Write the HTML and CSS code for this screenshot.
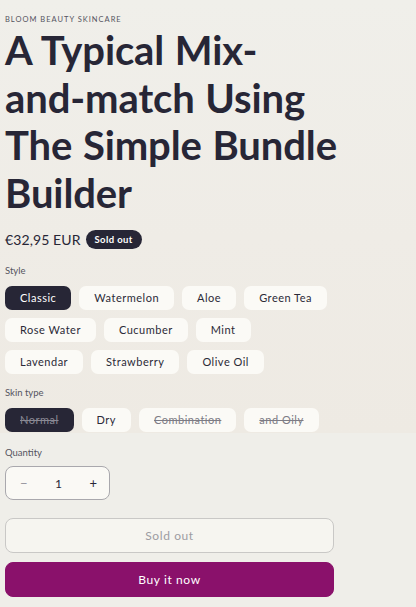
FILE: index.html
```html
<!DOCTYPE html>
<html lang="en">
<head>
<meta charset="utf-8">
<title>A Typical Mix-and-match Using The Simple Bundle Builder</title>
<link rel="stylesheet" href="styles.css">
</head>
<body>
<section class="upper">
  <div class="inner">
    <p class="brand">BLOOM BEAUTY SKINCARE</p>
    <h1 class="title">A Typical Mix-<br>and-match Using<br>The Simple Bundle<br>Builder</h1>
    <div class="price-row">
      <span class="price">€32,95 EUR</span>
      <span class="badge">Sold out</span>
    </div>
    <div class="option">
      <p class="label">Style</p>
      <div class="pills">
        <span class="pill selected">Classic</span>
        <span class="pill">Watermelon</span>
        <span class="pill">Aloe</span>
        <span class="pill">Green Tea</span>
        <span class="pill">Rose Water</span>
        <span class="pill">Cucumber</span>
        <span class="pill">Mint</span>
        <span class="pill">Lavendar</span>
        <span class="pill">Strawberry</span>
        <span class="pill">Olive Oil</span>
      </div>
    </div>
    <div class="option">
      <p class="label">Skin type</p>
      <div class="pills">
        <span class="pill selected unavailable">Normal</span>
        <span class="pill">Dry</span>
        <span class="pill unavailable">Combination</span>
        <span class="pill unavailable">and Oily</span>
      </div>
    </div>
  </div>
</section>
<section class="lower">
  <div class="inner">
    <p class="label">Quantity</p>
    <div class="qty">
      <span class="qty-btn minus">−</span>
      <span class="qty-val">1</span>
      <span class="qty-btn">+</span>
    </div>
    <button class="btn sold" type="button">Sold out</button>
    <button class="btn buy" type="button">Buy it now</button>
  </div>
</section>
</body>
</html>
```
FILE: styles.css
```css
* { box-sizing: border-box; }
html, body { margin: 0; padding: 0; }
body {
  background: #efeee9;
  font-family: "Lato", "Noto Sans", sans-serif;
  color: #272636;
}
.upper {
  background: linear-gradient(180deg, #f0efea 0%, #efece6 55%, #eeeae3 100%);
  padding-bottom: 1px;
}
.inner {
  width: 339px;
  padding: 0 5px;
}
.brand {
  margin: 0;
  padding-top: 15px;
  font-size: 7.5px;
  line-height: 10px;
  letter-spacing: 1px;
  color: #55545f;
}
.title {
  margin: 2px 0 0;
  font-size: 40px;
  line-height: 47.5px;
  font-weight: 700;
  letter-spacing: -0.1px;
  word-spacing: 1px;
  white-space: nowrap;
  color: #272636;
}
.price-row {
  margin-top: 12px;
  display: flex;
  align-items: center;
  gap: 5px;
  height: 20px;
}
.price {
  font-size: 14px;
  letter-spacing: 0.1px;
  color: #272636;
}
.badge {
  background: #272636;
  color: #fff;
  font-size: 9.5px;
  font-weight: 700;
  letter-spacing: 0.4px;
  padding: 0 9px;
  height: 19px;
  line-height: 19px;
  border-radius: 10px;
}
.option { margin-top: 16px; }
.option + .option { margin-top: 13px; }
.label {
  margin: 0 0 9px;
  font-size: 9.5px;
  line-height: 12px;
  color: #55545f;
}
.pills {
  width: 331px;
  display: flex;
  flex-wrap: wrap;
  gap: 8px;
}
.pill {
  height: 24px;
  line-height: 24px;
  padding: 0 15px;
  background: #fbfaf6;
  border-radius: 7px;
  font-size: 11px;
  letter-spacing: 0.5px;
  color: #2b2a38;
}
.pill.selected {
  background: #272636;
  color: #fff;
}
.pill.unavailable {
  text-decoration: line-through;
  color: #7d7c85;
}
.pill.selected.unavailable { color: #8a8994; }
.lower { padding-top: 14px; }
.lower .label { margin-bottom: 7px; }
.qty {
  width: 105px;
  height: 34px;
  border: 1px solid #a9a8ad;
  border-radius: 8px;
  background: #faf9f5;
  display: flex;
  align-items: center;
  justify-content: space-between;
  padding: 0 12px 0 14px;
  font-size: 12px;
  color: #272636;
}
.qty-btn { font-size: 13px; }
.qty-btn.minus { color: #9b9aa2; }
.btn {
  display: block;
  width: 329px;
  height: 35px;
  border-radius: 8px;
  font-family: inherit;
  font-size: 12px;
  letter-spacing: 0.6px;
  cursor: pointer;
}
.sold {
  margin-top: 18px;
  background: #f6f5f0;
  border: 1px solid #c9c8c6;
  color: #9d9ca2;
}
.buy {
  margin-top: 9px;
  background: #8a116b;
  border: 1px solid #8a116b;
  color: #fff;
}
```
